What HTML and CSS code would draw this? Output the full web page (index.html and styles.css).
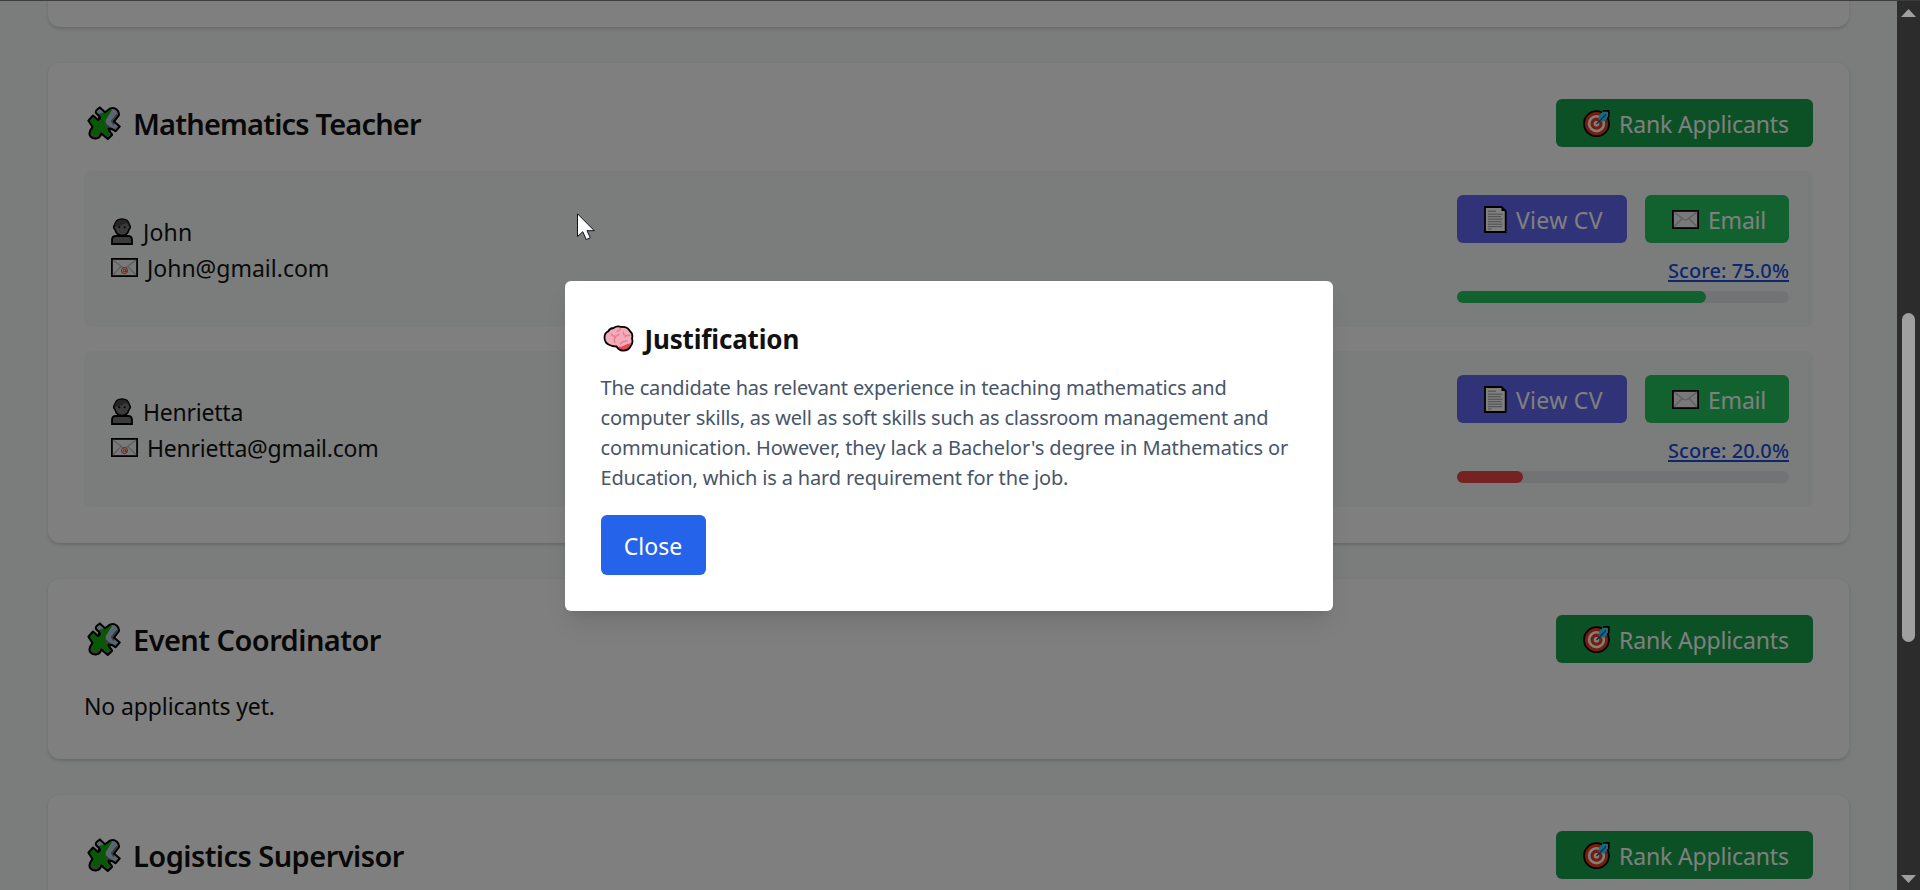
FILE: index.html
```
<!DOCTYPE html>
<html lang="en">
<head>
<meta charset="utf-8">
<title>Applicants</title>
<link rel="stylesheet" href="styles.css">
</head>
<body>
<svg class="defs" width="0" height="0">
  <symbol id="puzzle" viewBox="0 0 34 35">
    <path d="M9.200 7.200C7.500 4.500 10 4 12.800 1.400L18 6.200 23 2.600C28 .6 32.800 4.500 31.800 9.500L27 15.600 32.700 20.600 28.500 25.300C25.500 22.500 22.500 22 22 24.500 23 26.500 25.500 27 25 29L20.800 33 14.200 27.500C13 33 7 34 3.500 30.500 1.500 28 2 25.300 5.500 21L1.400 14.600 6 9.500 11 14C13 13.500 13.500 11.500 12 10Z" fill="#777"/>
    <path d="M9 5.500 12.800 2 18 6.200 23 3C28 1.500 31.500 5 30.500 9L25.800 15.300 31.500 20 28 23.500 22 20 14 13Z" fill="#b4cfe6"/>
    <path d="M1.800 14.500 6 9.800 10.500 13.500C14 16 16 13 13.500 10.500L11.500 8 16 6.500 22.500 3.500 25 4 18.500 14.500 19.500 23C23 20.500 24.500 23 24 28L20.500 30.500 14 25.500C12 29.500 8 30.500 3.500 27L6 21Z" fill="#13b00a"/>
    <path d="M30 8.500 25 15 27 18.500" fill="none" stroke="#777" stroke-width="2"/>
    <path d="M9.200 7.200C7.500 4.500 10 4 12.800 1.400L18 6.200 23 2.600C28 .6 32.800 4.500 31.800 9.500L27 15.600 32.700 20.600 28.500 25.300C25.500 22.500 22.500 22 22 24.500 23 26.500 25.500 27 25 29L20.800 33 14.200 27.500C13 33 7 34 3.500 30.500 1.500 28 2 25.300 5.500 21L1.400 14.600 6 9.500 11 14C13 13.500 13.500 11.500 12 10Z" fill="none" stroke="#000" stroke-width="2" stroke-linejoin="round"/>
    <circle cx="12.500" cy="12" r="1.800"/><circle cx="22" cy="23" r="1.600"/>
  </symbol>
  <symbol id="target" viewBox="0 0 27 27">
    <circle cx="13.500" cy="13.700" r="12.500" fill="#f03a17" stroke="#000" stroke-width="1.800"/>
    <circle cx="13.500" cy="13.700" r="7.400" fill="none" stroke="#fff" stroke-width="2.600"/>
    <circle cx="13.500" cy="13.700" r="2.800" fill="#fff"/>
    <path d="M15.500 10 16 5.500 20.500 1 25.600 1.200 25.800 6 21.500 11.300 17 11.500Z" fill="#31d2f7"/>
    <path d="M20 .9H25.800V7L24.500 8.300" fill="none" stroke="#000" stroke-width="1.600"/>
    <path d="M13.500 14 23 4.500" stroke="#0063b1" stroke-width="1.400"/>
  </symbol>
  <symbol id="doc" viewBox="0 0 23 27">
    <path d="M1 1H17.500L21.700 5V26H1Z" fill="#fff" stroke="#000" stroke-width="1.800"/>
    <path d="M17.500 1V5H21.700" fill="#000"/>
    <path d="M4 5.200H12M4 8.200H18.500M4 10.700H17M4 13.200H18.500M4 15.700H17.500M4 18.200H18.500M4 20.700H18M4 23H7.500" stroke="#999" stroke-width="1"/>
  </symbol>
  <symbol id="mail" viewBox="0 0 27 19">
    <rect x=".9" y=".9" width="25.200" height="17.200" fill="#f2f2f2" stroke="#000" stroke-width="1.800"/>
    <path d="M2 2 11 9Q13.500 11 16 9L25 2M2 17 10 8.500M25 17 17 8.500" fill="none" stroke="#bbb" stroke-width="1.200"/>
  </symbol>
  <symbol id="mail-at" viewBox="0 0 27 19">
    <use href="#mail"/>
    <circle cx="13.500" cy="12.600" r="3" fill="#f2f2f2" stroke="#f03a17"/>
    <circle cx="13.500" cy="12.600" r="1.200" fill="none" stroke="#f03a17"/>
    <path d="M14.800 11.500V13.500H16" fill="none" stroke="#f03a17" stroke-width=".8"/>
  </symbol>
  <symbol id="person" viewBox="0 0 22 27">
    <path d="M1 26V22Q1 18 5 18H17Q21 18 21 22V26Z" fill="#767676" stroke="#000" stroke-width="1.800"/>
    <path d="M3.800 6.500Q5 1 11 1T18.200 6.500Q20.500 9.500 18 11.500 16.500 17.500 11 17.500T4 11.500Q1.500 9.500 3.800 6.500Z" fill="#767676" stroke="#000" stroke-width="1.600"/>
    <path d="M4 7Q5 1.800 11 1.800T18 7L14.500 5 10 7.500 4.500 9Z" fill="#4c4a48"/>
    <circle cx="8.300" cy="9.300" r="1" /><circle cx="13.700" cy="9.300" r="1"/>
  </symbol>
  <symbol id="brain" viewBox="0 0 31 27">
    <path d="M10.500 3Q14 .5 18.500 2 24 1.500 26.500 5.500 30.500 9 29 13.500 30.500 18 27.500 21.500 25 26 19.500 25.500 16 25.500 13.500 21.500 9.500 21.500 6.500 20 1.500 18 1.500 12.500 1.500 8 5 6.500 7 3 10.500 3Z" fill="#f4abba"/>
    <path d="M14 21.500Q18 22.500 21 20.500T28.500 18Q26 26 19.500 25.500 16 25.500 14 21.500Z" fill="#e74856"/>
    <path d="M8 8.500Q9 11.500 12.500 11.500M12 18Q10.500 14.500 12.500 11.500L16.500 9M13.500 6.500Q17.500 6 17.500 2.500M20.500 6.500V9.500Q23.500 11.500 27.500 10M22 12.500 22.500 10.500M17 19.500Q19.500 15.500 24.500 16" fill="none" stroke="#e8808e" stroke-width="1.500"/>
    <path d="M10.500 3Q14 .5 18.500 2 24 1.500 26.500 5.500 30.500 9 29 13.500 30.500 18 27.500 21.500 25 26 19.500 25.500 16 25.500 13.500 21.500 9.500 21.500 6.500 20 1.500 18 1.500 12.500 1.500 8 5 6.500 7 3 10.500 3Z" fill="none" stroke="#000" stroke-width="1.800"/>
  </symbol>
</svg>

<div class="window">
  <main class="page">
    <section class="card card-previous"></section>

    <section class="card">
      <header class="card-header">
        <h2><svg class="i-puzzle"><use href="#puzzle"/></svg><span class="fit-math">Mathematics Teacher</span></h2>
        <button class="btn rank"><svg class="i-target"><use href="#target"/></svg><span>Rank Applicants</span></button>
      </header>
      <div class="applicant">
        <div class="who">
          <p><svg class="i-person"><use href="#person"/></svg><span class="fit-john">John</span></p>
          <p><svg class="i-mail"><use href="#mail-at"/></svg><span class="fit-john-mail">John@gmail.com</span></p>
        </div>
        <div class="actions">
          <div class="buttons">
            <button class="btn cv"><svg class="i-doc"><use href="#doc"/></svg><span>View CV</span></button>
            <button class="btn email"><svg class="i-mail"><use href="#mail"/></svg><span>Email</span></button>
          </div>
          <a class="score">Score: 75.0%</a>
          <div class="bar"><div class="fill good" style="width:75%"></div></div>
        </div>
      </div>
      <div class="applicant">
        <div class="who">
          <p><svg class="i-person"><use href="#person"/></svg><span class="fit-hen">Henrietta</span></p>
          <p><svg class="i-mail"><use href="#mail-at"/></svg><span class="fit-hen">Henrietta@gmail.com</span></p>
        </div>
        <div class="actions">
          <div class="buttons">
            <button class="btn cv"><svg class="i-doc"><use href="#doc"/></svg><span>View CV</span></button>
            <button class="btn email"><svg class="i-mail"><use href="#mail"/></svg><span>Email</span></button>
          </div>
          <a class="score">Score: 20.0%</a>
          <div class="bar"><div class="fill poor" style="width:20%"></div></div>
        </div>
      </div>
    </section>

    <section class="card">
      <header class="card-header">
        <h2><svg class="i-puzzle"><use href="#puzzle"/></svg><span>Event Coordinator</span></h2>
        <button class="btn rank"><svg class="i-target"><use href="#target"/></svg><span>Rank Applicants</span></button>
      </header>
      <p class="empty">No applicants yet.</p>
    </section>

    <section class="card">
      <header class="card-header">
        <h2><svg class="i-puzzle"><use href="#puzzle"/></svg><span>Logistics Supervisor</span></h2>
        <button class="btn rank"><svg class="i-target"><use href="#target"/></svg><span>Rank Applicants</span></button>
      </header>
    </section>
  </main>

  <aside class="scrollbar">
    <svg class="arrow" viewBox="0 0 15 8"><path d="M7.500 0 15 8H0Z" fill="#9f9f9f"/></svg>
    <div class="thumb"></div>
    <svg class="arrow" viewBox="0 0 15 8"><path d="M0 0H15L7.500 8Z" fill="#9f9f9f"/></svg>
  </aside>

  <div class="overlay">
    <div class="modal">
      <h3><svg class="i-brain"><use href="#brain"/></svg><span>Justification</span></h3>
      <p class="reason"><span class="l1">The candidate has relevant experience in teaching mathematics and</span><br><span class="l2">computer skills, as well as soft skills such as classroom management and</span><br><span class="l3">communication. However, they lack a Bachelor's degree in Mathematics or</span><br><span class="l4">Education, which is a hard requirement for the job.</span></p>
      <button class="close">Close</button>
    </div>
  </div>

  <svg class="cursor" viewBox="0 0 18 28"><path d="M.5 .8V23.500L5.800 18.700 9.200 26.500 13.300 24.800 10 17.700H17.300Z" fill="#fff" stroke="#10101c" stroke-width="1"/></svg>
</div>
</body>
</html>
```
FILE: styles.css
```
* { box-sizing: border-box; margin: 0; padding: 0; }
body { font: 400 23px/36px "Noto Sans", "Open Sans", sans-serif; color: #111; overflow: hidden; }
.defs { position: absolute; }
svg { display: block; flex: none; }
button { font: inherit; border: 0; }

.window { position: relative; display: grid; grid-template-columns: 1897px 23px; height: 890px; overflow: hidden; border-top: 1px solid #3d3d3d; }
.page { height: 889px; overflow: hidden; display: flex; flex-direction: column; gap: 36px; padding: 0 48px; background: #f6fbf9; }

.card { flex: none; padding: 36px; border-radius: 12px; background: #fff; box-shadow: 0 1.5px 4.5px rgba(0,0,0,.1), 0 1.5px 3px -1px rgba(0,0,0,.1); }
.card-previous { height: 72px; margin-top: -46px; }
.card-header { display: flex; justify-content: space-between; align-items: center; height: 48px; margin-bottom: 24px; }
h2 { display: flex; align-items: center; padding-left: 3px; font-size: 29px; font-weight: 600; line-height: 42px; letter-spacing: -.55px; white-space: nowrap; }
.fit-math { letter-spacing: -.82px; }
h2 span, .btn span, .who span { padding-top: 2px; }

.btn { display: flex; align-items: center; height: 48px; padding-left: 27px; border-radius: 6px; color: #fff; white-space: nowrap; }
.rank { width: 257px; background: #16a34a; letter-spacing: -.15px; }
.cv { width: 170px; background: #6366f1; letter-spacing: .3px; }
.email { width: 144px; background: #22c55e; letter-spacing: -.2px; }

.applicant { display: flex; justify-content: space-between; align-items: center; height: 156px; padding: 0 24px 0 27px; border-radius: 6px; background: #f7fbf9; }
.applicant + .applicant { margin-top: 24px; }
.who p { display: flex; align-items: center; height: 36px; }
.fit-john { letter-spacing: .2px; }
.fit-john-mail { letter-spacing: 0; }
.fit-hen { letter-spacing: -.23px; }
.actions { width: 332px; display: flex; flex-direction: column; align-items: flex-end; }
.buttons { display: flex; gap: 18px; margin-bottom: 12px; }
.score { padding-top: 1px; margin-bottom: 5px; font-size: 20px; font-weight: 500; line-height: 30px; letter-spacing: .08px; color: #1d4ed8; text-decoration: underline; text-decoration-thickness: 2px; text-underline-offset: 2px; }
.bar { width: 332px; height: 12px; border-radius: 6px; background: #e5e7eb; }
.fill { height: 12px; border-radius: 6px; }
.good { background: #22c55e; }
.poor { background: #ef4444; }
.empty { padding-top: 1px; height: 36px; letter-spacing: -.12px; }

.i-puzzle { width: 34px; height: 35px; margin-right: 12px; }
.i-target { width: 27px; height: 27px; margin-right: 9px; }
.i-doc { width: 23px; height: 27px; margin-right: 9px; }
.i-mail { width: 27px; height: 19px; margin-right: 9px; }
.i-person { width: 22px; height: 27px; margin-right: 10px; }
.i-brain { width: 31px; height: 27px; margin-right: 11px; }

.scrollbar { display: grid; grid-template-rows: 304px 1fr 8px; justify-items: center; height: 889px; padding: 8px 0 7px; background: #2c2c2c; }
.arrow { width: 15px; height: 8px; }
.thumb { width: 13px; height: 329px; border-radius: 7px; background: #9f9f9f; }

.overlay { position: absolute; top: 0; left: 0; width: 1897px; height: 889px; display: flex; align-items: center; justify-content: center; background: rgba(0,0,0,.5); }
.modal { width: 768px; height: 330px; padding: 36px; border-radius: 6px; background: #fff; box-shadow: 0 15px 23px -4px rgba(0,0,0,.1), 0 6px 9px -6px rgba(0,0,0,.1); }
h3 { display: flex; align-items: center; height: 42px; margin-bottom: 12px; padding: 2px 0 0 2px; font-size: 26px; font-weight: 700; letter-spacing: -.15px; }
.reason { padding-top: 2px; margin-bottom: 22px; font-size: 20px; line-height: 30px; color: #475569; white-space: nowrap; }
.l1 { letter-spacing: -.19px; }
.l2 { letter-spacing: -.21px; }
.l3 { letter-spacing: -.11px; }
.l4 { letter-spacing: -.16px; }
.close { width: 105px; height: 60px; padding-top: 2px; border-radius: 6px; background: #2563eb; color: #fff; text-align: center; }

.cursor { position: absolute; left: 577px; top: 212px; width: 18px; height: 28px; }
```
